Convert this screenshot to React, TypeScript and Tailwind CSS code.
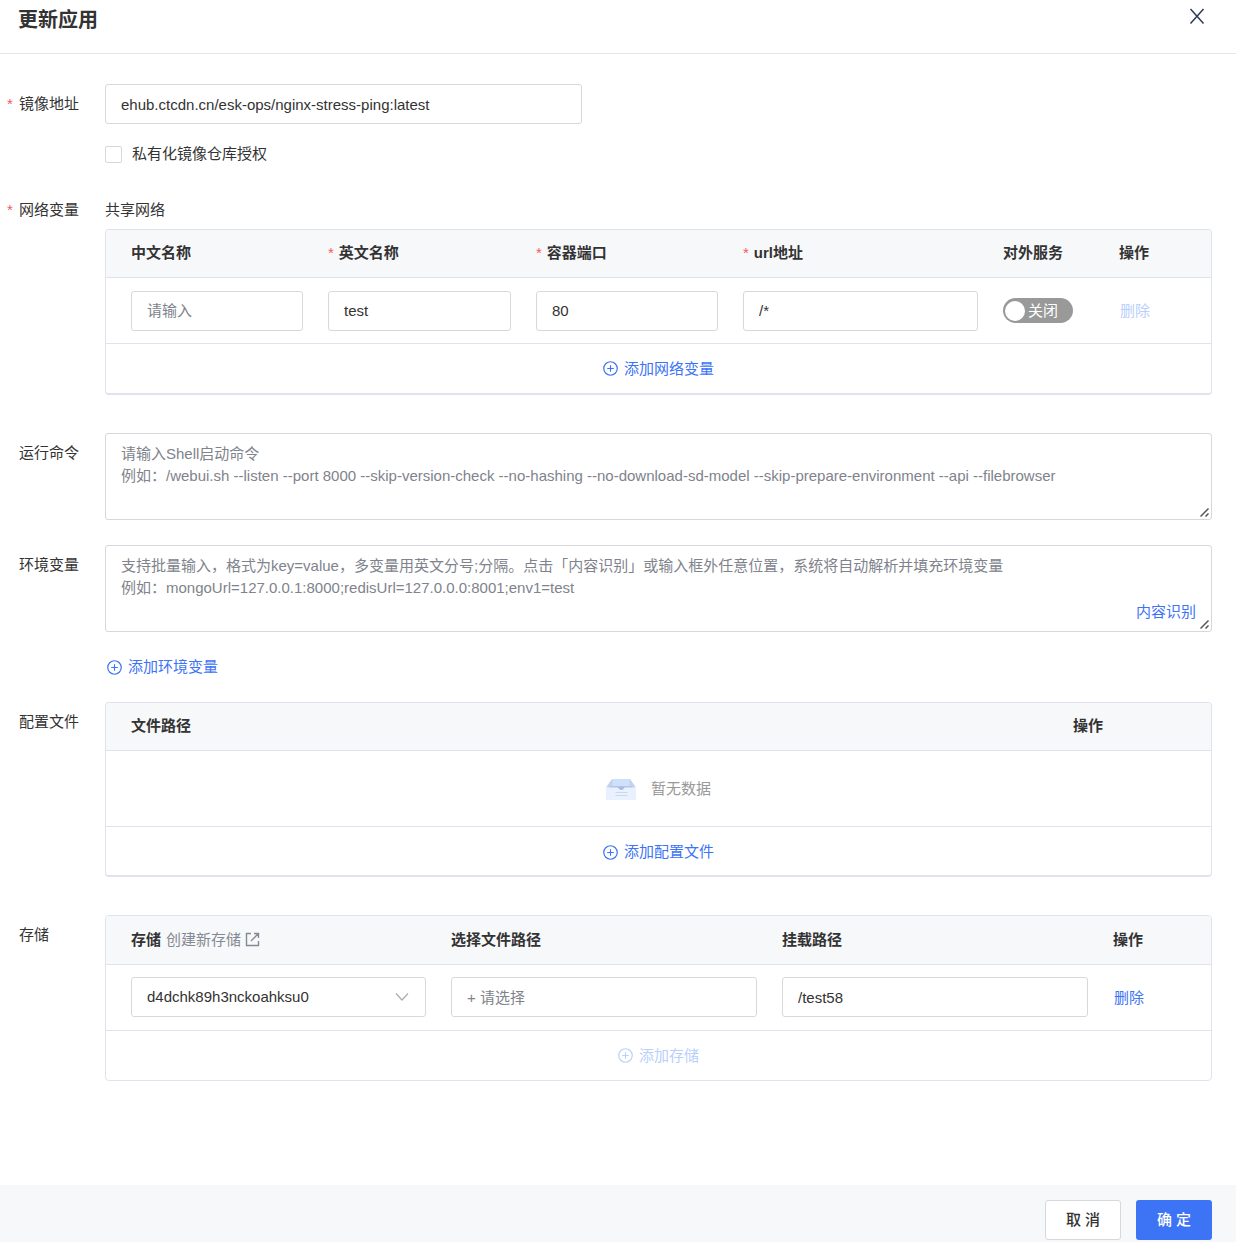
import { useState } from 'react'
import type { ComponentProps, ReactNode } from 'react'

const inputClass =
  'block h-10 w-full rounded-[3px] border border-[#d7d8db] bg-white px-[15px] text-[15px] text-[#333333] outline-none placeholder:text-[#80838c] placeholder:opacity-100 focus:border-[#3d73f5]'

const textareaClass =
  'block h-[87px] w-full resize-y rounded-[3px] border border-[#d7d8db] bg-white px-[15px] pt-[9px] text-[15px] leading-[22px] text-[#333333] outline-none placeholder:text-[#80838c] placeholder:opacity-100 focus:border-[#3d73f5] [&::-webkit-resizer]:bg-transparent'

function CirclePlus() {
  return (
    <svg className="size-[15px]" viewBox="0 0 16 16" fill="none" stroke="currentColor" aria-hidden="true">
      <circle cx="8" cy="8" r="7.2" strokeWidth="1.3" />
      <path d="M8 4.500v7M4.500 8h7" strokeWidth="1.2" />
    </svg>
  )
}

function EmptyBox() {
  return (
    <svg className="mt-0.5 h-[21px] w-[30px]" viewBox="0 0 30 21" aria-hidden="true">
      <path d="M6 0h18l6 8.500H0z" fill="#c3d1ec" />
      <path d="M6.500 0h17v7h-17z" fill="#cfe0fd" />
      <path d="M5 7h20l3 2H2z" fill="#b4c4e4" />
      <path d="M0 8.500h11.500c1 0 1.300 3 3.500 3s2.500-3 3.500-3H30V21H0z" fill="#e9f1ff" />
      <path d="M12 8h6.500c-.6 2-1.500 3-3.300 3S12.500 10 12 8z" fill="#a9bbdf" />
      <path d="M9.500 13.500h12M9.500 16.500h12" stroke="#cad7ee" />
    </svg>
  )
}

function TextArea({ children, ...props }: ComponentProps<'textarea'>) {
  return (
    <div className="relative">
      <textarea className={textareaClass} {...props} />
      <svg
        className="pointer-events-none absolute right-0.5 bottom-0.5 size-[10px] bg-white"
        viewBox="0 0 10 10"
        fill="none"
        stroke="#55575c"
        strokeWidth="1.5"
        aria-hidden="true"
      >
        <path d="M0.500 8.500l8-8M5.500 8.500l3-3" />
      </svg>
      {children}
    </div>
  )
}

function AddButton({ children, disabled }: { children: ReactNode; disabled?: boolean }) {
  return (
    <button
      type="button"
      disabled={disabled}
      className="inline-flex h-5 items-center gap-1.5 leading-5 text-[#3d73f5] disabled:text-[#b9d0fd]"
    >
      <CirclePlus />
      {children}
    </button>
  )
}

function Label({ children, htmlFor, required }: { children: ReactNode; htmlFor?: string; required?: boolean }) {
  return (
    <label htmlFor={htmlFor} className="flex w-[105px] shrink-0 pl-[7px]">
      <span className="w-3 text-[#f35b5b]">{required && '*'}</span>
      {children}
    </label>
  )
}

function Th({ children, required }: { children: ReactNode; required?: boolean }) {
  return (
    <th scope="col" className="border-b border-[#e0e3ee] pb-px pl-[25px] text-left font-bold">
      {required && <span className="mr-[5px] font-normal text-[#f35b5b]">*</span>}
      {children}
    </th>
  )
}

export default function App() {
  const [image, setImage] = useState('ehub.ctcdn.cn/esk-ops/nginx-stress-ping:latest')
  const [isPublic, setIsPublic] = useState(false)

  return (
    <form className="flex min-h-screen flex-col bg-white font-['Liberation_Sans','Noto_Sans_CJK_SC',sans-serif] text-[15px] leading-5 text-[#333333]">
      <header className="flex h-[54px] items-start justify-between border-b border-[#e4e6f0] pr-[31px] pl-[18px]">
        <h1 className="pt-2 text-[20px] leading-6 font-bold">更新应用</h1>
        <button type="button" aria-label="关闭" className="mt-2 text-[#2f3b55]">
          <svg className="size-4" viewBox="0 0 16 16" fill="none" stroke="currentColor" strokeWidth="1.5" aria-hidden="true">
            <path d="M1.500 1l13 14.500M14.500 1l-13 14.500" />
          </svg>
        </button>
      </header>

      <main className="flex-1 pt-[30px] pr-6">
        <div className="flex">
          <div className="leading-10">
            <Label htmlFor="image" required>镜像地址</Label>
          </div>
          <div className="flex-1">
            <input
              id="image"
              className={`${inputClass} max-w-[477px]`}
              value={image}
              onChange={(e) => setImage(e.target.value)}
            />
            <label className="mt-5 flex h-5 items-center gap-2.5">
              <input
                type="checkbox"
                className="size-[17px] appearance-none rounded-xs border border-[#d7d8db] bg-white checked:bg-[#3d73f5]"
              />
              私有化镜像仓库授权
            </label>
          </div>
        </div>

        <div className="mt-9 flex">
          <Label required>网络变量</Label>
          <div className="flex-1">
            <p>共享网络</p>
            <div className="mt-[9px] overflow-hidden rounded-sm border border-b-2 border-[#e0e3ee]">
              <table className="w-full table-fixed border-separate border-spacing-0">
                <colgroup>
                  <col className="w-[197px]" />
                  <col className="w-[208px]" />
                  <col className="w-[207px]" />
                  <col className="w-[260px]" />
                  <col className="w-[116px]" />
                  <col className="w-[117px]" />
                </colgroup>
                <thead className="bg-[#f7f8fa]">
                  <tr className="h-12">
                    <Th>中文名称</Th>
                    <Th required>英文名称</Th>
                    <Th required>容器端口</Th>
                    <Th required>url地址</Th>
                    <Th>对外服务</Th>
                    <Th>操作</Th>
                  </tr>
                </thead>
                <tbody>
                  <tr className="h-[66px]">
                    <td className="border-b border-[#e0e3ee] pl-[25px]">
                      <input className={inputClass} placeholder="请输入" aria-label="中文名称" />
                    </td>
                    <td className="border-b border-[#e0e3ee] pl-[25px]">
                      <input className={inputClass} defaultValue="test" aria-label="英文名称" />
                    </td>
                    <td className="border-b border-[#e0e3ee] pl-[25px]">
                      <input className={inputClass} defaultValue="80" aria-label="容器端口" />
                    </td>
                    <td className="border-b border-[#e0e3ee] pl-[25px]">
                      <input className={inputClass} defaultValue="/*" aria-label="url地址" />
                    </td>
                    <td className="border-b border-[#e0e3ee] pl-[25px]">
                      <label
                        className={`flex h-[25px] w-[70px] items-center gap-[3px] rounded-full px-0.5 text-white ${isPublic ? 'flex-row-reverse bg-[#3d73f5]' : 'bg-[#999999]'}`}
                      >
                        <input
                          type="checkbox"
                          role="switch"
                          className="sr-only"
                          checked={isPublic}
                          onChange={(e) => setIsPublic(e.target.checked)}
                        />
                        <span className="size-5 rounded-full bg-white" />
                        {isPublic ? '开启' : '关闭'}
                      </label>
                    </td>
                    <td className="border-b border-[#e0e3ee] pl-[26px]">
                      <button type="button" disabled className="text-[#b9d0fd]">删除</button>
                    </td>
                  </tr>
                </tbody>
              </table>
              <div className="flex h-[49px] items-center justify-center">
                <AddButton>添加网络变量</AddButton>
              </div>
            </div>
          </div>
        </div>

        <div className="mt-[38px] flex">
          <div className="leading-10">
            <Label htmlFor="command">运行命令</Label>
          </div>
          <div className="flex-1">
            <TextArea
              id="command"
              placeholder={'请输入Shell启动命令\n例如：/webui.sh --listen --port 8000 --skip-version-check --no-hashing --no-download-sd-model --skip-prepare-environment --api --filebrowser'}
            />
          </div>
        </div>

        <div className="mt-[25px] flex">
          <div className="leading-10">
            <Label htmlFor="env">环境变量</Label>
          </div>
          <div className="flex-1">
            <TextArea
              id="env"
              placeholder={'支持批量输入，格式为key=value，多变量用英文分号;分隔。点击「内容识别」或输入框外任意位置，系统将自动解析并填充环境变量\n例如：mongoUrl=127.0.0.1:8000;redisUrl=127.0.0.0:8001;env1=test'}
            >
              <button type="button" className="absolute right-4 bottom-2.5 text-[#3d73f5]">内容识别</button>
            </TextArea>
            <div className="mt-[25px] flex pl-0.5">
              <AddButton>添加环境变量</AddButton>
            </div>
          </div>
        </div>

        <div className="mt-[25px] flex">
          <div className="leading-10">
            <Label>配置文件</Label>
          </div>
          <div className="flex-1 overflow-hidden rounded-sm border border-b-2 border-[#e0e3ee]">
            <table className="w-full table-fixed border-separate border-spacing-0">
              <colgroup>
                <col className="w-[942px]" />
                <col className="w-[163px]" />
              </colgroup>
              <thead className="bg-[#f7f8fa]">
                <tr className="h-12">
                  <Th>文件路径</Th>
                  <Th>操作</Th>
                </tr>
              </thead>
              <tbody>
                <tr className="h-[76px]">
                  <td colSpan={2} className="border-b border-[#e0e3ee]">
                    <div className="flex items-center justify-center gap-[15px] text-[#999999]">
                      <EmptyBox />
                      暂无数据
                    </div>
                  </td>
                </tr>
              </tbody>
            </table>
            <div className="flex h-12 items-center justify-center pt-0.5">
              <AddButton>添加配置文件</AddButton>
            </div>
          </div>
        </div>

        <div className="mt-[38px] flex">
          <div className="leading-10">
            <Label htmlFor="storage">存储</Label>
          </div>
          <div className="flex-1 overflow-hidden rounded-sm border border-[#e0e3ee]">
            <table className="w-full table-fixed border-separate border-spacing-0">
              <colgroup>
                <col className="w-[320px]" />
                <col className="w-[331px]" />
                <col className="w-[331px]" />
                <col className="w-[123px]" />
              </colgroup>
              <thead className="bg-[#f7f8fa]">
                <tr className="h-[49px]">
                  <Th>
                    <span className="flex items-center">
                      存储
                      <a href="#storage" className="ml-[5px] flex items-center gap-1 font-normal text-[#868994]">
                        创建新存储
                        <svg className="size-[15px]" viewBox="0 0 15 15" fill="none" stroke="currentColor" strokeWidth="1.4" aria-hidden="true">
                          <path d="M6 1.500H1.500v12h12V9M9 1.500h4.500v4.500M13.500 1.500L6 9" />
                        </svg>
                      </a>
                    </span>
                  </Th>
                  <Th>选择文件路径</Th>
                  <Th>挂载路径</Th>
                  <Th>操作</Th>
                </tr>
              </thead>
              <tbody>
                <tr className="h-[66px]">
                  <td className="border-b border-[#e0e3ee] pb-px pl-[25px]">
                    <div className="relative">
                      <select id="storage" className={`${inputClass} appearance-none`}>
                        <option>d4dchk89h3nckoahksu0</option>
                      </select>
                      <svg
                        className="pointer-events-none absolute top-3 right-4 size-4 text-[#a8abb2]"
                        viewBox="0 0 16 16"
                        fill="none"
                        stroke="currentColor"
                        strokeWidth="1.2"
                        aria-hidden="true"
                      >
                        <path d="M2 4.500l6 6.500 6-6.500" />
                      </svg>
                    </div>
                  </td>
                  <td className="border-b border-[#e0e3ee] pb-px pl-[25px]">
                    <input className={inputClass} placeholder="+ 请选择" aria-label="选择文件路径" />
                  </td>
                  <td className="border-b border-[#e0e3ee] pb-px pl-[25px]">
                    <input className={inputClass} defaultValue="/test58" aria-label="挂载路径" />
                  </td>
                  <td className="border-b border-[#e0e3ee] pl-[26px]">
                    <button type="button" className="text-[#3d73f5]">删除</button>
                  </td>
                </tr>
              </tbody>
            </table>
            <div className="flex h-[49px] items-center justify-center">
              <AddButton disabled>添加存储</AddButton>
            </div>
          </div>
        </div>
      </main>

      <footer className="flex justify-end gap-[15px] bg-[#f7f8fa] pt-[15px] pr-6 pb-0.5">
        <button type="button" className="h-10 w-[76px] rounded-[3px] border border-[#d7d8db] bg-white font-medium">
          取 消
        </button>
        <button type="submit" className="h-10 w-[76px] rounded-[3px] bg-[#3d73f5] font-medium text-white">
          确 定
        </button>
      </footer>
    </form>
  )
}
